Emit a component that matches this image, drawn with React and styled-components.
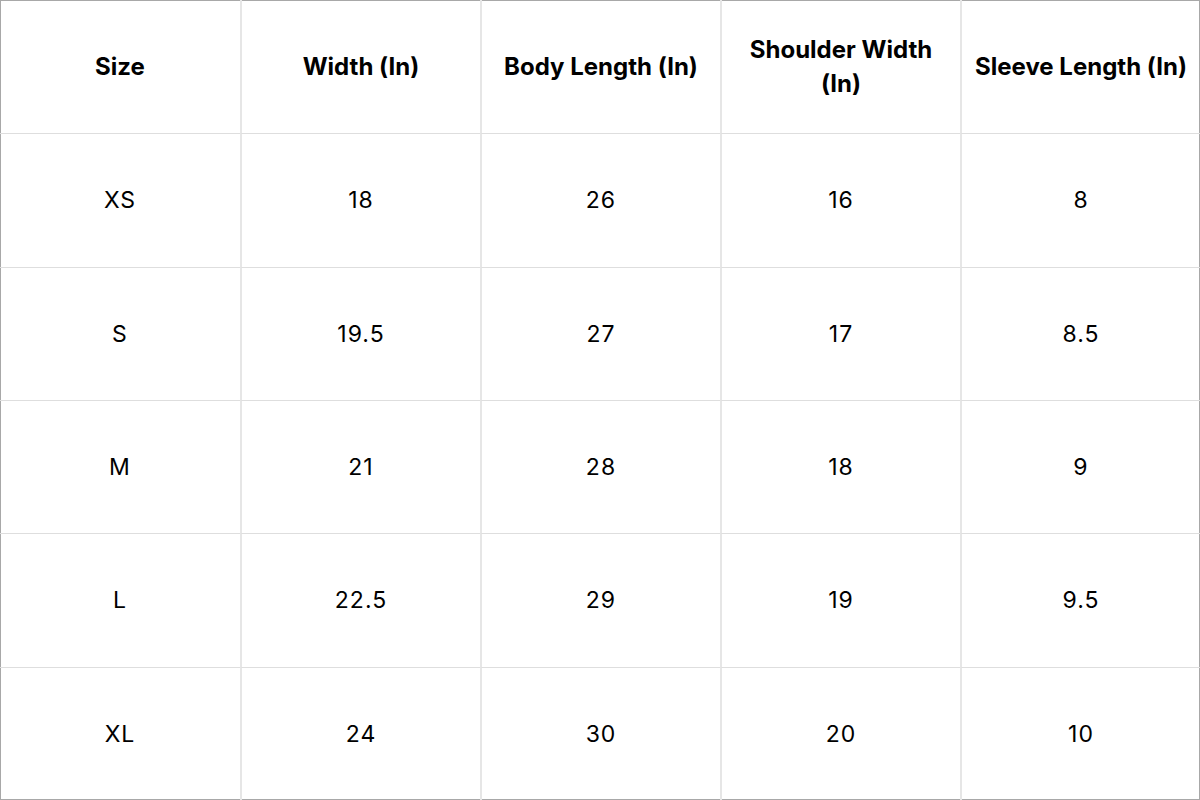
import React from "react";
import styled, { createGlobalStyle } from "styled-components";

const GlobalStyle = createGlobalStyle`
  html, body {
    margin: 0;
    padding: 0;
    background: #ffffff;
  }
`;

const Chart = styled.div`
  box-sizing: border-box;
  width: 1200px;
  height: 800px;
  box-shadow: inset 0 0 0 1px #a8a8a8;
  display: grid;
  grid-template-columns: repeat(5, 1fr);
  grid-template-rows: repeat(6, 1fr);
  font-family: Inter, "Open Sans", "Liberation Sans", sans-serif;
  color: #000;
  background: #fff;
`;

const Cell = styled.div`
  box-sizing: border-box;
  display: flex;
  align-items: center;
  justify-content: center;
  text-align: center;
  padding: 0 12px;
  font-size: ${(p) => (p.head ? "24px" : "23px")};
  font-weight: ${(p) => (p.head ? 700 : 400)};
  letter-spacing: ${(p) => (p.head ? "0" : "1px")};
  line-height: 34px;
  border-left: ${(p) => (p.firstCol ? "none" : "2px solid #e6e6e6")};
  border-top: ${(p) => (p.head ? "none" : "1px solid #dedede")};
`;

const headers = [
  "Size",
  "Width (In)",
  "Body Length (In)",
  "Shoulder Width (In)",
  "Sleeve Length (In)",
];

const rows = [
  ["XS", "18", "26", "16", "8"],
  ["S", "19.5", "27", "17", "8.5"],
  ["M", "21", "28", "18", "9"],
  ["L", "22.5", "29", "19", "9.5"],
  ["XL", "24", "30", "20", "10"],
];

function App() {
  return (
    <>
      <GlobalStyle />
      <Chart>
        {headers.map((h, i) => (
          <Cell key={h} head firstCol={i === 0}>
            {h}
          </Cell>
        ))}
        {rows.map((row, r) =>
          row.map((v, c) => (
            <Cell key={r + "-" + c} firstCol={c === 0}>
              {v}
            </Cell>
          ))
        )}
      </Chart>
    </>
  );
}

export default App;
